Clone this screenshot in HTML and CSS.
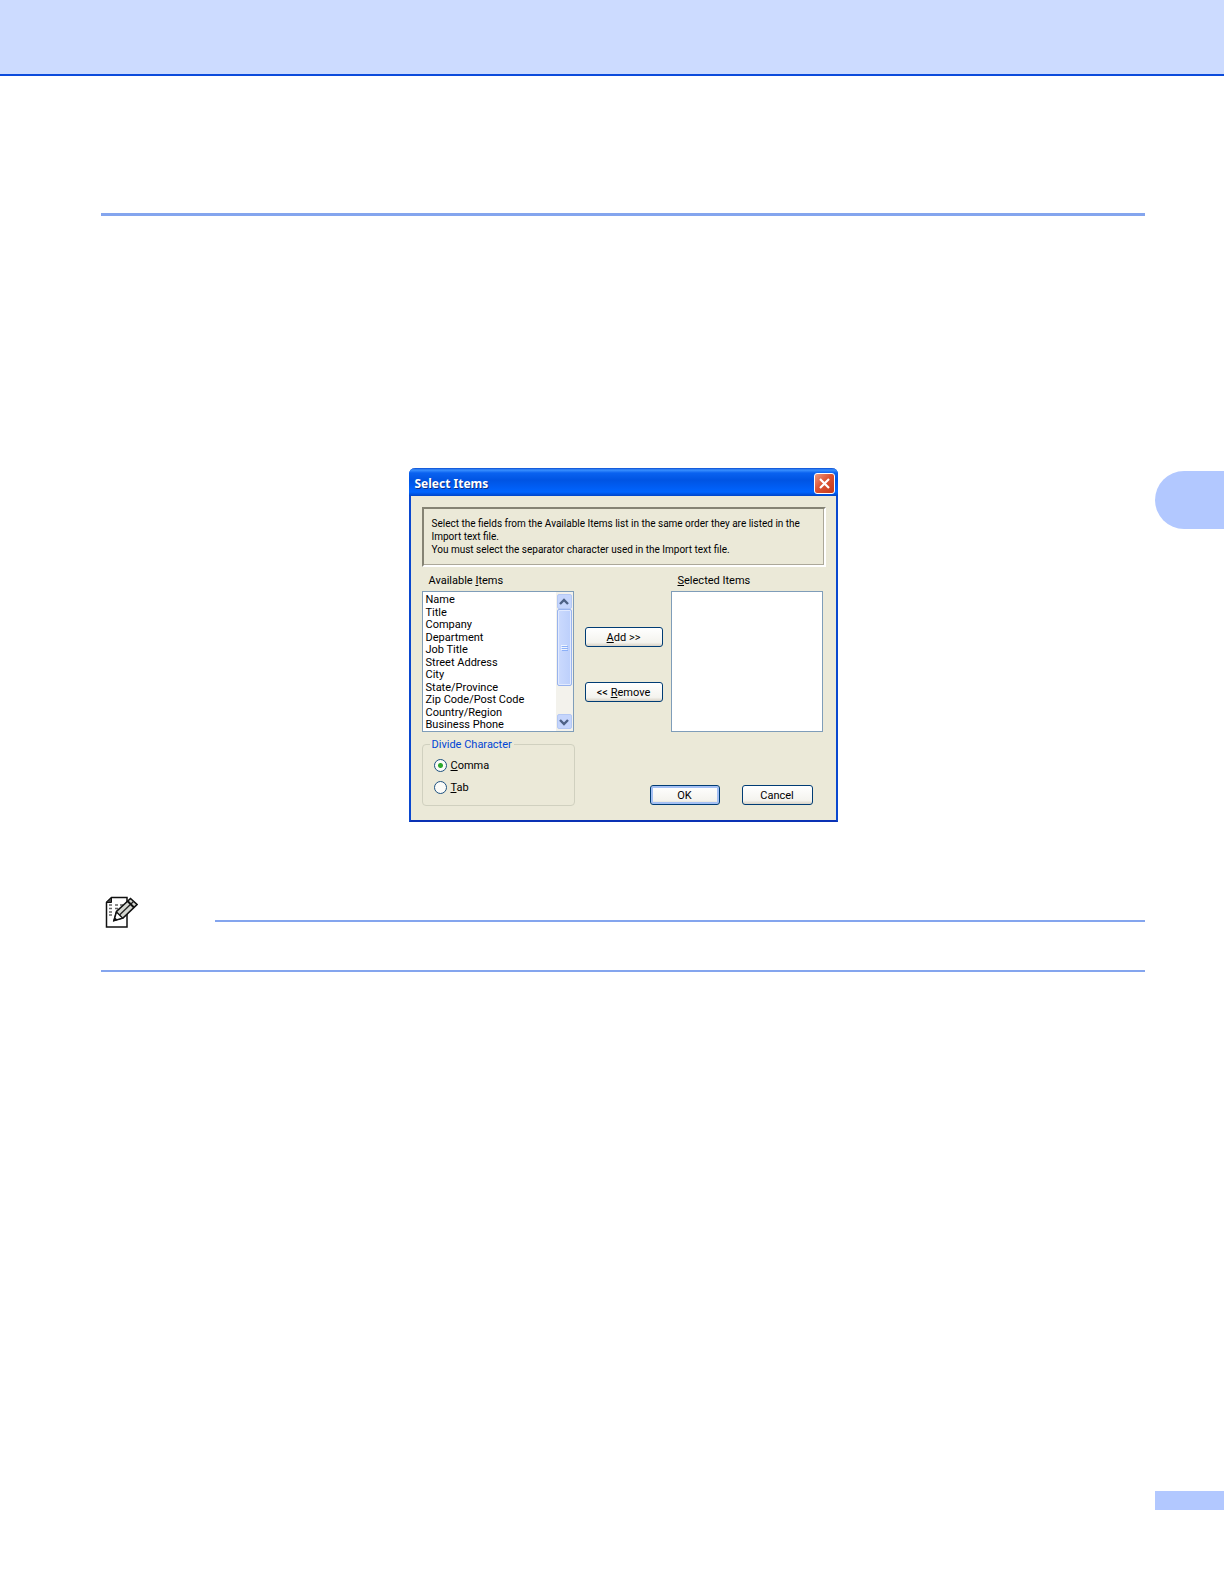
FILE: index.html
```html
<!DOCTYPE html>
<html lang="en">
<head>
<meta charset="utf-8">
<title>Select Items</title>
<link rel="stylesheet" href="styles.css">
</head>
<body>
<header class="page-header"></header>
<div class="page">
  <main class="content">
    <hr class="section-rule">
    <form class="dialog" role="dialog" aria-labelledby="dialog-title">
      <div class="title-bar">
        <h1 class="title" id="dialog-title">Select Items</h1>
        <button class="close" type="button" aria-label="Close">
          <svg width="13" height="13" viewBox="0 0 13 13"><path d="M2 2l9 9M11 2l-9 9" stroke="#fff" stroke-width="2.2" fill="none"/></svg>
        </button>
      </div>
      <div class="dialog-body">
        <p class="info">Select the fields from the Available Items list in the same order they are listed in the<br>Import text file.<br>You must select the separator character used in the Import text file.</p>
        <div class="picker">
          <div class="column">
            <span class="label" id="available-label">Available <u>I</u>tems</span>
            <div class="list-box">
              <ul class="options" role="listbox" aria-labelledby="available-label">
                <li role="option">Name</li>
                <li role="option">Title</li>
                <li role="option">Company</li>
                <li role="option">Department</li>
                <li role="option">Job Title</li>
                <li role="option">Street Address</li>
                <li role="option">City</li>
                <li role="option">State/Province</li>
                <li role="option">Zip Code/Post Code</li>
                <li role="option">Country/Region</li>
                <li role="option">Business Phone</li>
              </ul>
              <div class="scrollbar">
                <button class="arrow" type="button" aria-label="Scroll up"><svg width="10" height="8" viewBox="0 0 10 8"><path d="M1 6l4-4 4 4" stroke="#4d6185" stroke-width="2.4" fill="none"/></svg></button>
                <div class="thumb"><svg width="7" height="8" viewBox="0 0 7 8"><path d="M0 1.5h6M0 3.5h6M0 5.5h6" stroke="#eef4fe"/><path d="M1 2.5h6M1 4.5h6M1 6.5h6" stroke="#8cb0f8"/></svg></div>
                <button class="arrow arrow-down" type="button" aria-label="Scroll down"><svg width="10" height="8" viewBox="0 0 10 8"><path d="M1 2l4 4 4-4" stroke="#4d6185" stroke-width="2.4" fill="none"/></svg></button>
              </div>
            </div>
          </div>
          <div class="moves">
            <button class="button" type="button"><span><u>A</u>dd &gt;&gt;</span></button>
            <button class="button" type="button"><span>&lt;&lt; <u>R</u>emove</span></button>
          </div>
          <div class="column">
            <span class="label" id="selected-label"><u>S</u>elected Items</span>
            <div class="list-box"><ul class="options" role="listbox" aria-labelledby="selected-label"></ul></div>
          </div>
        </div>
        <div class="bottom">
          <fieldset class="group">
            <legend>Divide Character</legend>
            <label class="choice"><input type="radio" name="divider" checked><span><u>C</u>omma</span></label>
            <label class="choice"><input type="radio" name="divider"><span><u>T</u>ab</span></label>
          </fieldset>
          <div class="actions">
            <button class="button default" type="button">OK</button>
            <button class="button" type="button">Cancel</button>
          </div>
        </div>
      </div>
    </form>
    <section class="note">
      <div class="note-head">
        <svg class="note-icon" width="33" height="33" viewBox="0 -1 33 33" fill="none">
          <path d="M6.500 .5H22V30H1.500V5.500Z" fill="#fff" stroke="#111" stroke-width="1.500"/>
          <path d="M1 5.500L6.500 .5v5Z" fill="#444" stroke="#111"/>
          <path d="M4 8h3M10 8h3M15 8h3M4 11.500h3M10 11.500h3M4 15h3M4 18h3" stroke="#666" stroke-width="1.500"/>
          <path d="M9 23.500L11.500 14.500 25.500 1.500 32 7.500 18 21Z" fill="#d4d6d0" stroke="#111" stroke-width="1.600"/>
          <path d="M11.500 15l6 6L9 23.500Z" fill="#fff" stroke="#111" stroke-width="1.300"/>
          <path d="M14.500 18L28.500 4.500" stroke="#222" stroke-width="1.300"/>
          <path d="M22.500 4l6.500 6.500" stroke="#111" stroke-width="2"/>
          <path d="M8.500 24l1-4 3 2.800Z" fill="#111"/>
        </svg>
        <hr class="note-rule">
      </div>
      <hr class="note-rule">
    </section>
  </main>
  <aside class="margin-marks">
    <div class="chapter-tab"></div>
    <div class="page-mark"></div>
  </aside>
</div>
</body>
</html>
```
FILE: styles.css
```css
* { box-sizing: border-box; }

body {
  margin: 0;
  min-height: 100vh;
  display: flex;
  flex-direction: column;
  background: #fff;
  color: #000;
  font: 11px/13px Roboto, "Liberation Sans", sans-serif;
}

.page-header {
  height: 76px;
  background: #ccdbff;
  border-bottom: 2px solid #0b4bdc;
}

.page {
  flex: 1;
  display: flex;
  gap: 10px;
}

.content {
  flex: 1;
  padding: 137px 0 0 101px;
}

hr {
  margin: 0;
  border: 0;
  background: #84a5ee;
}

.section-rule { height: 3px; }

/* Dialog window */
.dialog {
  width: 429px;
  margin: 252px auto 0;
  border: solid #0a48cf;
  border-width: 0 2px 2px;
  border-bottom-color: #0a31b4;
  border-radius: 6px 6px 0 0;
  background: #ebe9d8;
}

.title-bar {
  display: flex;
  align-items: center;
  justify-content: space-between;
  height: 28px;
  margin: 0 -2px;
  padding: 3px 3px 0 6px;
  border-radius: 6px 6px 0 0;
  background: linear-gradient(#0a4bd0 0, #3a90ff 2px, #0a62f0 5px, #0054e3 12px, #0060f8 21px, #0065ff 24px, #0045c8 28px);
}

.title {
  margin: 0;
  color: #fff;
  font: bold 12px/16px "Noto Sans", sans-serif;
  text-shadow: 1px 1px 0 #0a2f88;
}

.close {
  display: grid;
  place-items: center;
  width: 21px;
  height: 21px;
  padding: 0;
  border: 1px solid #fff;
  border-radius: 3px;
  background: linear-gradient(135deg, #ee9a80, #dc5433 45%, #c4391a);
}

.dialog-body { padding: 11px 10px 14px 11px; }

.info {
  height: 60px;
  margin: 0 0 7px;
  padding: 8px;
  border: 2px solid;
  border-color: #858374 #fff #fff #858374;
  box-shadow: inset -1px -1px 0 #aca899;
  font-size: 10px;
  white-space: nowrap;
}

.picker { display: flex; }

.column { width: 152px; }

.label {
  display: block;
  margin: 0 0 4px;
  padding-left: 7px;
}

.list-box {
  display: flex;
  height: 141px;
  border: 1px solid #7f9db9;
  background: #fff;
}

.options {
  flex: 1;
  display: flex;
  flex-direction: column;
  justify-content: space-between;
  margin: 0;
  padding: 1px 3px;
  list-style: none;
}

.options li { height: 12px; }

.scrollbar {
  display: flex;
  flex-direction: column;
  width: 17px;
  padding: 2px 1px;
  background: #f3f2ec;
}

.arrow {
  display: grid;
  place-items: center;
  height: 15px;
  padding: 0;
  border: 1px solid #b4c8f4;
  border-radius: 2px;
  background: #c5d5fc;
}

.arrow-down { margin-top: auto; }

.thumb {
  display: grid;
  place-items: center;
  height: 77px;
  border: 1px solid #98b3ee;
  border-radius: 2px;
  background: linear-gradient(90deg, #cbdafd, #bccffb);
  box-shadow: inset 0 0 0 1px #e2eafe;
}

.moves {
  display: flex;
  flex-direction: column;
  gap: 35px;
  width: 78px;
  margin: 53px 8px 0 11px;
}

.button {
  height: 20px;
  padding: 0;
  border: 1px solid #003c74;
  border-radius: 3px;
  background: linear-gradient(#fff, #f4f3ee 80%, #d8d2c6);
  color: #000;
  font: inherit;
}

.default { box-shadow: inset 0 0 0 2px #a4c0f4; }

.bottom {
  display: flex;
  align-items: flex-end;
  justify-content: space-between;
  margin-top: 6px;
}

.group {
  width: 153px;
  height: 68px;
  margin: 0;
  padding: 8px 11px;
  border: 1px solid #d0d0bf;
  border-radius: 4px;
}

.group legend {
  margin-left: -4px;
  padding: 0 2px;
  color: #0046d5;
}

.choice {
  display: flex;
  align-items: center;
  gap: 4px;
  height: 13px;
  margin-bottom: 9px;
}

.choice input {
  appearance: none;
  width: 13px;
  height: 13px;
  margin: 0;
  border: 1px solid #1c5180;
  border-radius: 50%;
  background: #fbfbf8;
}

.choice input:checked { background: radial-gradient(circle, #2ca82c 0 2px, #fbfbf8 3px); }

.actions {
  display: grid;
  grid-template-columns: 70px 71px;
  gap: 22px;
  padding: 0 13px 1px 0;
}

/* Note block */
.note { margin-top: 74px; }

.note-head {
  display: flex;
  align-items: flex-end;
  gap: 77px;
  margin-bottom: 41px;
  padding-left: 4px;
}

.note-head .note-rule {
  flex: 1;
  margin-bottom: 7px;
}

.note-rule { height: 2px; }

/* Marks on the outer page edge */
.margin-marks {
  display: flex;
  flex-direction: column;
  justify-content: space-between;
  width: 69px;
  padding: 395px 0 74px;
}

.chapter-tab {
  height: 58px;
  border-radius: 29px 0 0 29px;
  background: #b2c8ff;
}

.page-mark {
  height: 19px;
  background: #b2c8ff;
}
```
